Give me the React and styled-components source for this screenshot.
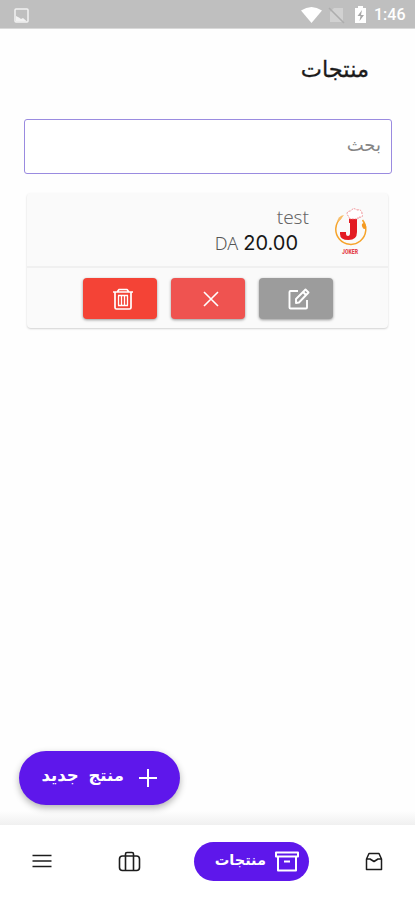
import React from 'react';
import styled, { createGlobalStyle } from 'styled-components';

// Global Styles
const GlobalStyle = createGlobalStyle`
  * {
    box-sizing: border-box;
  }

  body {
    margin: 0;
    background: #fefefe;
    font-family: 'Noto Sans', 'DejaVu Sans', sans-serif;
  }
`;

// Styled Components
const Screen = styled.div`
  direction: rtl;
  display: flex;
  flex-direction: column;
  width: 415px;
  height: 900px;
  overflow: hidden;
  background: #fefefe;
`;

const StatusBar = styled.div`
  direction: ltr;
  display: flex;
  align-items: center;
  justify-content: space-between;
  height: 29px;
  flex-shrink: 0;
  padding: 0 9px 0 14px;
  background: #bfbfbf;
  border-bottom: 1px solid #d9d9d9;
`;

const StatusIcons = styled.div`
  display: flex;
  align-items: center;
  height: 28px;
  padding-top: 2px;
`;

const Clock = styled.span`
  margin-left: 6px;
  color: #fff;
  font: 500 16px/20px Roboto, sans-serif;
  width: 32px;
  white-space: nowrap;
`;

const Content = styled.main`
  flex: 1;
  display: flex;
  flex-direction: column;
`;

const Title = styled.h1`
  margin: 24px 46px 0 0;
  color: #1c1c1c;
  font: 500 22.5px/32px 'DejaVu Sans', sans-serif;
  -webkit-text-stroke: 0.3px #1c1c1c;
`;

const SearchInput = styled.input`
  width: 368px;
  height: 55px;
  margin: 34px 23px 0 0;
  padding: 0 10px 5px;
  background: #fff;
  border: 1px solid #9a8be0;
  border-radius: 3px;
  outline: none;
  font: 18px 'DejaVu Sans', sans-serif;

  &::placeholder {
    color: #858585;
    opacity: 1;
  }
`;

const Card = styled.section`
  width: 361px;
  height: 135px;
  margin: 19px 27px 0 0;
  background: #fafafa;
  border-radius: 4px;
  box-shadow: 0 1px 2px rgba(0, 0, 0, 0.18);
`;

const ProductRow = styled.div`
  display: flex;
  height: 75px;
  padding: 14px 21px 0 0;
  border-bottom: 2px solid #f0f0f0;
`;

const ProductInfo = styled.div`
  margin-right: 24px;
`;

const ProductName = styled.div`
  color: #666;
  font: 300 19px/20px 'Noto Sans', sans-serif;
`;

const Price = styled.div`
  direction: ltr;
  display: flex;
  justify-content: flex-end;
  align-items: baseline;
  gap: 5px;
  margin: 5px 11px 0 0;
  color: #171717;
  font: 400 20px/22px Inter, sans-serif;
`;

const Currency = styled.span`
  color: #555;
  font: 300 18px/22px 'Noto Sans', sans-serif;
`;

const Actions = styled.div`
  display: flex;
  gap: 14px;
  padding: 10px 55px 0 0;
`;

const ActionButton = styled.button`
  display: flex;
  align-items: center;
  justify-content: center;
  width: 74px;
  height: 41px;
  padding: 0 0 0 5px;
  border: none;
  border-radius: 4px;
  background: ${({ $color }) => $color};
  color: #fff;
  box-shadow: 0 1px 3px rgba(0, 0, 0, 0.4);
`;

const FabArea = styled.div`
  display: flex;
  justify-content: flex-end;
  margin-top: auto;
  padding: 0 0 20px 19px;
  background: linear-gradient(to bottom, transparent calc(100% - 14px), #f0f0f0);
`;

const Fab = styled.button`
  display: flex;
  align-items: center;
  gap: 14px;
  width: 161px;
  height: 54px;
  padding: 0 22px 0 0;
  border: none;
  border-radius: 27px;
  background: #5e17eb;
  color: #fff;
  box-shadow: 0 3px 7px rgba(0, 0, 0, 0.3);
`;

const FabLabel = styled.span`
  padding-bottom: 5px;
  font: bold 16.5px/24px 'DejaVu Sans', sans-serif;
  word-spacing: 4px;
  white-space: nowrap;
`;

const BottomNav = styled.nav`
  display: flex;
  align-items: center;
  height: 75px;
  flex-shrink: 0;
  padding: 0 32px 2px 0;
  background: #fff;
`;

const NavItem = styled.button`
  display: flex;
  align-items: center;
  margin-right: ${({ $gap }) => $gap || 0}px;
  padding: 0;
  border: none;
  background: none;
  color: #1c1c1c;
`;

const ActiveItem = styled(NavItem)`
  gap: 9px;
  width: 115px;
  height: 39px;
  padding-right: 10px;
  border-radius: 20px;
  background: #5e17eb;
  color: #fff;
`;

const NavLabel = styled.span`
  padding-bottom: 4px;
  font: bold 14.5px/24px 'DejaVu Sans', sans-serif;
  white-space: nowrap;
`;

const Line = styled.svg`
  display: block;
  flex-shrink: 0;
  fill: none;
  stroke: currentColor;
  stroke-width: ${({ $weight }) => $weight || 1.5};
  stroke-linejoin: round;
`;

const PictureIcon = () => (
  <Line width="15" height="15" viewBox="0 0 15 15" color="#f2f2f2">
    <rect x="1" y="1" width="13" height="13" rx="1" />
    <path d="M2 8l3 1.500 2 1.500 2-1 4 3.500H2z" fill="currentColor" stroke="none" />
  </Line>
);

const SignalIcons = () => (
  <svg width="68" height="20" viewBox="0 0 68 20">
    <path d="M1 5.500Q11.500 -1.500 22 5.500L11.500 18z" fill="#fff" />
    <path d="M34 3h9v14H30V7z" fill="#d1d1d1" />
    <path d="M29 3l15 15" stroke="#adadad" strokeWidth="1.600" />
    <path d="M55 3h3V1h5v2h3v15H55z" fill="#fff" />
    <path d="M62 5l-4.500 6h3l-1 5 4.500-6h-3z" fill="#a8a8a8" />
  </svg>
);

const ProductLogo = () => (
  <svg width="34" height="48" viewBox="0 0 34 48">
    <path d="M8 11A15 15 0 1 0 29.500 13" fill="none" stroke="#f6a42b" strokeWidth="1.500" />
    <path d="M4 15Q5 9 11 8L8 12z" fill="#f8bd68" />
    <ellipse cx="31" cy="19" rx="1.900" ry="3" fill="#f49a22" transform="rotate(-20 31 19)" />
    <path d="M16 12h8v13q0 8-8.500 8Q7 33 7 27v-2h6v2q0 2 2 2t2-3V16h-1z" fill="#e31b23" />
    <path d="M17 12l-3-5q0-3 4-3 2-4 6-1 5-1 5 4 2 4-4 3v2z" fill="#fff" stroke="#ec747a" strokeWidth="0.800" strokeDasharray="2 1" />
    <text x="17" y="46.500" textAnchor="middle" textLength="16" lengthAdjust="spacingAndGlyphs" fontFamily="Roboto, sans-serif" fontSize="6.500" fontWeight="900" fill="#e5454c">JOKER</text>
  </svg>
);

const EditIcon = () => (
  <Line width="24" height="24" viewBox="0 0 24 24" $weight={1.9}>
    <path d="M11 4H3.500Q2.500 4 2.500 5v15.500q0 1 1 1h15.500q1 0 1-1V13" />
    <path d="M9 16v-4L18.500 2.500l3 3L12 15.500z" />
    <path d="M16 5l3 3" />
  </Line>
);

const CloseIcon = () => (
  <Line width="18" height="18" viewBox="0 0 18 18" $weight={1.6}>
    <path d="M2 2l14 14M16 2L2 16" />
  </Line>
);

const TrashIcon = () => (
  <Line width="22" height="22" viewBox="0 0 22 22" $weight={1.7}>
    <path d="M1 4h20M5.500 3.500L7 1.500h8l1.500 2" />
    <path d="M3 4v15.500q0 1.500 1.500 1.500h13q1.500 0 1.500-1.500V4" />
    <path d="M6.500 7.500v10M9.500 7.500v10M12.500 7.500v10M15.500 7.500v10M6 7.500h10M6 17.500h10" strokeWidth="1.300" />
  </Line>
);

const PlusIcon = () => (
  <Line width="20" height="20" viewBox="0 0 20 20" $weight={2}>
    <path d="M10 1v18M1 10h18" />
  </Line>
);

const InboxIcon = () => (
  <Line width="18" height="19" viewBox="0 0 18 19" $weight={1.5}>
    <path d="M1.500 7L4 1.500h10L16.500 7v10.500h-15zM1.500 7H5l4 2.500L13 7h3.500" />
  </Line>
);

const ArchiveIcon = () => (
  <Line width="24" height="21" viewBox="0 0 24 21" $weight={2}>
    <path d="M1 1.500h22v4H1zM3 5.500V19.500h18V5.500M9 10.500h6" />
  </Line>
);

const SuitcaseIcon = () => (
  <Line width="23" height="21" viewBox="0 0 23 21" $weight={1.6}>
    <rect x="1.500" y="5" width="20" height="14.500" rx="3" />
    <path d="M7.500 19.500V3q0-1.500 1.500-1.500h5q1.500 0 1.500 1.500v16.500" />
  </Line>
);

const MenuIcon = () => (
  <Line width="20" height="18" viewBox="0 0 20 18" $weight={1.6}>
    <path d="M0.500 2.500h19M0.500 8h19M0.500 13.500h19" />
  </Line>
);

// Products Page Component
const App = () => {
  return (
    <Screen>
      <GlobalStyle />
      <StatusBar>
        <StatusIcons>
          <PictureIcon />
        </StatusIcons>
        <StatusIcons>
          <SignalIcons />
          <Clock>1:46</Clock>
        </StatusIcons>
      </StatusBar>

      <Content>
        <Title>منتجات</Title>
        <SearchInput placeholder="بحث" />

        {/* Product Card */}
        <Card>
          <ProductRow>
            <ProductLogo />
            <ProductInfo>
              <ProductName>test</ProductName>
              <Price>
                <Currency>DA</Currency>20.00
              </Price>
            </ProductInfo>
          </ProductRow>
          <Actions>
            <ActionButton $color="#9c9c9c" aria-label="تعديل">
              <EditIcon />
            </ActionButton>
            <ActionButton $color="#ef5350" aria-label="إلغاء">
              <CloseIcon />
            </ActionButton>
            <ActionButton $color="#f44336" aria-label="حذف">
              <TrashIcon />
            </ActionButton>
          </Actions>
        </Card>

        <FabArea>
          <Fab>
            <PlusIcon />
            <FabLabel>منتج جديد</FabLabel>
          </Fab>
        </FabArea>
      </Content>

      {/* Bottom Navigation */}
      <BottomNav>
        <NavItem>
          <InboxIcon />
        </NavItem>
        <ActiveItem $gap={56}>
          <ArchiveIcon />
          <NavLabel>منتجات</NavLabel>
        </ActiveItem>
        <NavItem $gap={53}>
          <SuitcaseIcon />
        </NavItem>
        <NavItem $gap={66}>
          <MenuIcon />
        </NavItem>
      </BottomNav>
    </Screen>
  );
};

export default App;
